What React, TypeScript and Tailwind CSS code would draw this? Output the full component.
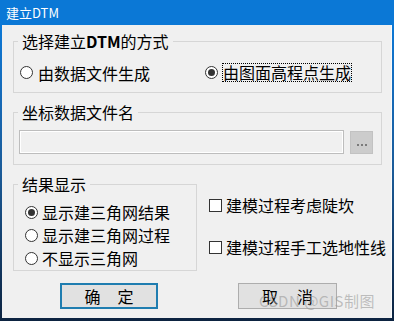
import React from "react";

function Radio({ checked }: { checked?: boolean }) {
  return (
    <span className="flex h-[13px] w-[13px] shrink-0 items-center justify-center rounded-full border border-[#333] bg-white">
      {checked && <span className="h-[7px] w-[7px] rounded-full bg-[#333]" />}
    </span>
  );
}

function Check() {
  return <span className="h-[13px] w-[13px] shrink-0 border border-[#333] bg-white" />;
}

function GroupLabel({ children }: { children: React.ReactNode }) {
  return (
    <span className="absolute left-[4px] top-[-10px] bg-[#f0f0f0] px-[4px] text-[16px] leading-[18px] text-black">
      {children}
    </span>
  );
}

export default function App() {
  return (
    <div className="flex h-[321px] w-[394px] flex-col font-['Noto_Sans_CJK_SC','Microsoft_YaHei',sans-serif] text-black">
      <div className="flex h-[25px] shrink-0 items-center bg-[#0b78d6] pl-[6px] text-[13px] leading-[16px] text-white">
        建立DTM
      </div>
      <div className="flex flex-1 flex-col bg-gradient-to-b from-[#0b78d6] via-[#1b5b98] to-[#0c2340] px-[2px] pb-[3px]">
        <div className="relative flex flex-1 flex-col border-r border-[#fafafa] bg-[#f0f0f0] pl-[11px]">
          {/* Group 1 */}
          <div className="relative mt-[16px] h-[52px] w-[369px] border border-[#d6d6d6]">
            <GroupLabel>
              选择建立<span className="font-bold">DTM</span>的方式
            </GroupLabel>
            <div className="flex pl-[6px] pt-[21px] text-[16px] leading-[18px]">
              <div className="flex w-[185px] items-center gap-[5px]">
                <Radio />
                <span>由数据文件生成</span>
              </div>
              <div className="flex items-center gap-[4px]">
                <Radio checked />
                <span className="border border-dotted border-black leading-[17px]">由图面高程点生成</span>
              </div>
            </div>
          </div>

          {/* Group 2 */}
          <div className="relative mt-[19px] h-[53px] w-[369px] border border-[#d6d6d6]">
            <GroupLabel>坐标数据文件名</GroupLabel>
            <div className="flex gap-[6px] pl-[5px] pt-[17px]">
              <div className="h-[24px] w-[325px] border border-[#bdbdbd] bg-[#f0f0f0] shadow-[inset_0_0_0_1px_#ffffff]" />
              <div className="mt-[1px] flex h-[23px] w-[23px] items-end justify-center gap-[2px] border border-[#c2c2c2] bg-[#cccccc] pb-[7px]">
                <span className="h-[2px] w-[2px] bg-[#7a7a7a]" />
                <span className="h-[2px] w-[2px] bg-[#7a7a7a]" />
                <span className="h-[2px] w-[2px] bg-[#7a7a7a]" />
              </div>
            </div>
          </div>

          {/* Group 3 + checkboxes */}
          <div className="mt-[19px] flex">
            <div className="relative h-[87px] w-[184px] border border-[#d6d6d6]">
              <GroupLabel>结果显示</GroupLabel>
              <div className="flex flex-col gap-[5px] pl-[11px] pt-[18px] text-[16px] leading-[18px]">
                <div className="flex items-center gap-[4px]">
                  <Radio checked />
                  <span>显示建三角网结果</span>
                </div>
                <div className="flex items-center gap-[4px]">
                  <Radio />
                  <span>显示建三角网过程</span>
                </div>
                <div className="flex items-center gap-[4px]">
                  <Radio />
                  <span>不显示三角网</span>
                </div>
              </div>
            </div>
            <div className="ml-[12px] flex flex-col gap-[24px] pt-[12px] text-[16px] leading-[18px]">
              <div className="flex h-[18px] items-center gap-[4px]">
                <Check />
                <span>建模过程考虑陡坎</span>
              </div>
              <div className="flex h-[18px] items-center gap-[4px]">
                <Check />
                <span>建模过程手工选地性线</span>
              </div>
            </div>
          </div>

          {/* Buttons */}
          <div className="mt-[12px] flex">
            <div className="ml-[47px] flex h-[26px] w-[98px] items-center justify-center gap-[17px] border-2 border-[#1f7db0] bg-[#e1e1e1] text-[16px] leading-[18px]">
              <span>确</span>
              <span>定</span>
            </div>
            <div className="ml-[80px] flex h-[26px] w-[99px] items-center justify-center gap-[19px] border border-[#adadad] bg-[#e1e1e1] text-[16px] leading-[18px]">
              <span>取</span>
              <span>消</span>
            </div>
          </div>

          <span className="pointer-events-none absolute left-[257px] top-[268px] text-[15px] leading-[16px] tracking-[0.5px] text-[#9a9a9a]/60">
            CSDN @GIS制图
          </span>
        </div>
      </div>
    </div>
  );
}
